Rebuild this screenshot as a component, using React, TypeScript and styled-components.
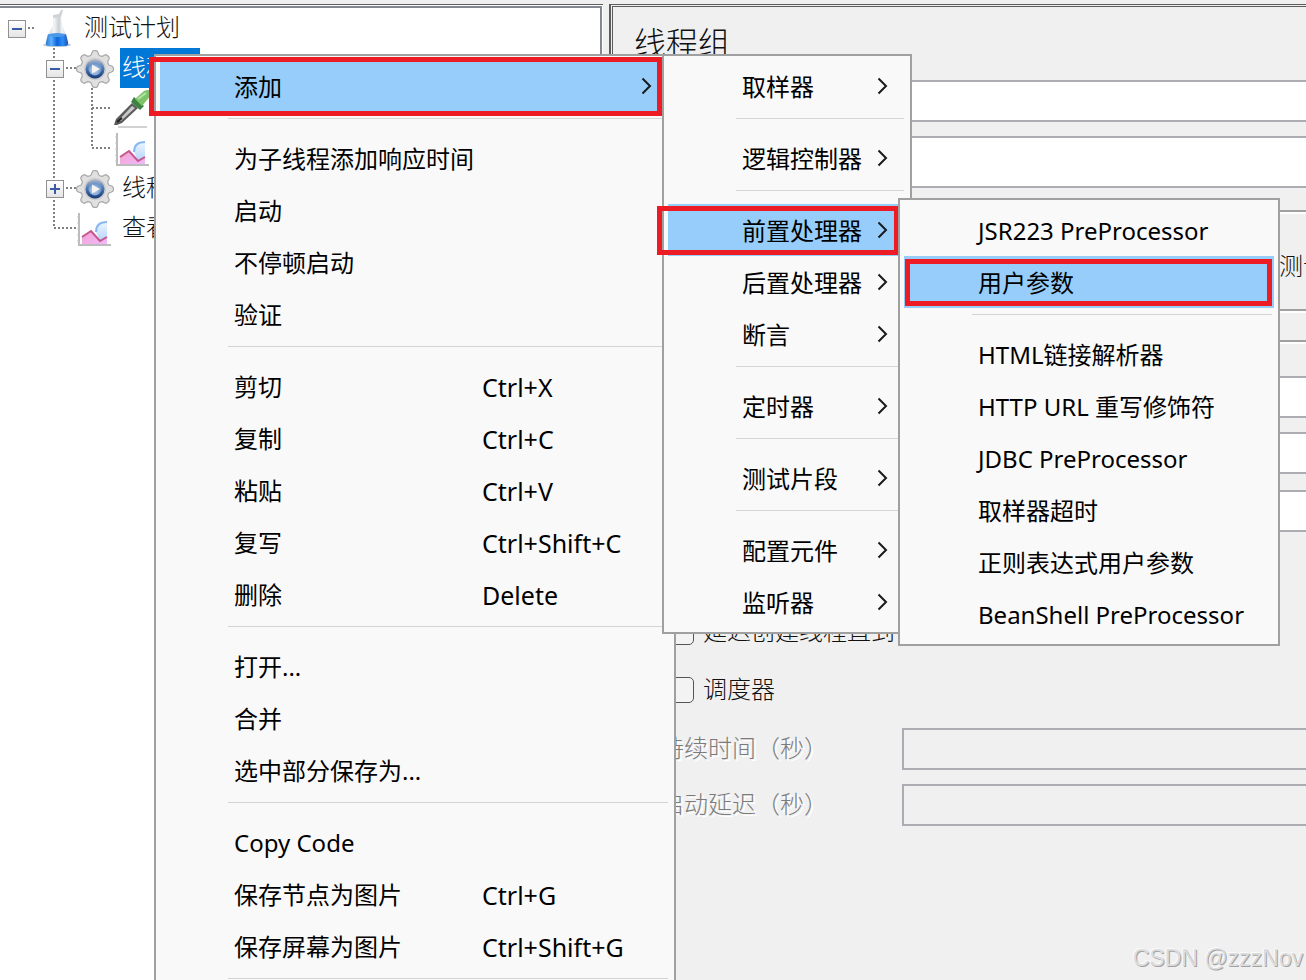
import React from 'react';
import styled, { createGlobalStyle, css } from 'styled-components';

const Global = createGlobalStyle`
  *, *::before, *::after { box-sizing: border-box; }
  html, body { margin: 0; height: 100%; }
  #root { height: 100%; }
  body { background: #f0f0f0; overflow: hidden; }
`;

const songFont = '"Liberation Serif", "Noto Sans CJK SC", serif';

const Window = styled.main`
  position: relative;
  display: flex;
  gap: 6px;
  min-height: 100vh;
  padding-top: 4px;
  background: #f0f0f0;
  color: #111;
  font: 300 24px/40px ${songFont};
  overflow: hidden;
`;

const TreePane = styled.nav`
  flex: 0 0 603px;
  border-top: 1px solid #5c5c5c;
  padding: 1px 1px 0 0;
  background: #fff;
`;

const Tree = styled.ul`
  position: relative;
  height: 100%;
  margin: 0;
  padding: 0;
  border: solid #828790;
  border-width: 2px 2px 0 0;
  background: #fff;
  list-style: none;
`;

const TreeRow = styled.li<{ $level: number }>`
  position: relative;
  display: grid;
  grid-template-columns: 18px 38px auto;
  column-gap: 12px;
  align-items: center;
  justify-content: start;
  height: 40px;
  padding-left: ${(p) => 8 + p.$level * 38}px;
`;

const Expander = styled.button`
  display: block;
  width: 18px;
  height: 18px;
  margin-top: 2px;
  padding: 0;
  border: 1px solid #919191;
  background: linear-gradient(#fff, #e4e4e4);
  svg { display: block; }
`;

const NodeIcon = styled.span`
  grid-column: 2;
  height: 40px;
  svg { display: block; overflow: visible; }
`;

const NodeLabel = styled.span<{ $selected?: boolean }>`
  grid-column: 3;
  margin-left: -6px;
  padding: 0 6px 0 2px;
  white-space: nowrap;
  ${(p) => p.$selected && css`background: #0078d7; color: #fff;`}
`;

const Lines = styled.svg`
  position: absolute;
  left: 0;
  top: 0;
`;

const DetailPane = styled.section`
  flex: 1;
  min-width: 0;
  border: solid #5c5c5c;
  border-width: 1px 0 0 2px;
  padding: 1px 0 0 1px;
`;

const DetailBody = styled.div`
  border: solid #5c5c5c;
  border-width: 1px 0 0 1px;
  padding: 12px 0 0 21px;
`;

const Title = styled.h1`
  margin: 0;
  font: 300 32px/50px ${songFont};
`;

const Field = styled.input<{ $tall?: boolean }>`
  display: block;
  width: 100%;
  height: ${(p) => (p.$tall ? 52 : 42)}px;
  padding: 0 8px;
  border: 2px solid #abadb3;
  border-right: 0;
  border-radius: 0;
  background: #fff;
  font: inherit;
  &:disabled { background: #f0f0f0; }
`;

const Head = styled.div`
  display: grid;
  gap: 14px;
  padding: 11px 0 22px 90px;
`;

const Group = styled.div`
  border: solid #a0a0a0;
  border-width: 2px 0 2px 2px;
  box-shadow: inset 0 2px #fff, 0 2px #fff;
`;

const Actions = styled(Group)`
  height: 101px;
  padding: 35px 0 0 643px;
  white-space: nowrap;
  overflow: hidden;
`;

const Properties = styled(Group)`
  margin-top: 29px;
  padding: 34px 0 0 24px;
  border-bottom: 0;
  box-shadow: inset 0 2px #fff;
`;

const Stack = styled.div`
  display: grid;
  gap: 14px;
  padding-left: 242px;
  & + & { margin-top: 16px; }
`;

const Checks = styled.div`
  display: grid;
  gap: 18px;
  padding: 80px 0 18px 8px;
`;

const Check = styled.label`
  display: flex;
  align-items: center;
  gap: 9px;
  white-space: nowrap;
  input {
    appearance: none;
    width: 26px;
    height: 26px;
    margin: 0;
    border: 1px solid #555;
    border-radius: 5px;
    background: #f3f3f3;
  }
`;

const Timing = styled.div`
  display: grid;
  grid-template-columns: 242px 1fr;
  row-gap: 14px;
  align-items: center;
  label {
    color: #7c7c7c;
    text-shadow: 2px 2px #fff;
    white-space: nowrap;
  }
`;

const Menu = styled.div<{ $x: number; $y: number; $w: number }>`
  position: absolute;
  left: ${(p) => p.$x}px;
  top: ${(p) => p.$y}px;
  width: ${(p) => p.$w}px;
  padding: 4px;
  border: 2px solid #a0a0a0;
  background: #f9f9f9;
  color: #000;
  font: 400 24px/30px "Noto Sans", "Noto Sans CJK SC", sans-serif;
`;

const Item = styled.button<{ $active?: boolean }>`
  position: relative;
  display: grid;
  grid-template-columns: 248px 1fr auto;
  align-items: center;
  width: 100%;
  height: 52px;
  padding: 0 18px 0 74px;
  border: 0;
  background: ${(p) => (p.$active ? '#96cdfb' : 'transparent')};
  color: inherit;
  font: inherit;
  text-align: left;
  white-space: nowrap;
`;

const ItemText = styled.span`
  padding-top: 2px;
`;

const Shortcut = styled(ItemText)`
  font-size: 25px;
`;

const SubItem = styled(Item)`
  grid-template-columns: 1fr auto;
`;

const Divider = styled.hr`
  height: 1px;
  margin: 6px 2px 13px 68px;
  border: 0;
  background: #d5d5d5;
`;

const Mark = styled.span<{ $inset: string }>`
  position: absolute;
  inset: ${(p) => p.$inset};
  border: 5px solid #ed1c24;
  pointer-events: none;
`;

const Watermark = styled.div`
  position: absolute;
  right: 3px;
  bottom: 4px;
  color: #dcdcdc;
  font: 400 23px/36px "Liberation Sans", sans-serif;
  text-shadow: 1px 1px #a2a2a2, -1px -1px #fafafa;
`;

const Chevron = () => (
  <svg width="11" height="18" viewBox="0 0 11 18" fill="none" stroke="#1a1a1a" strokeWidth="2">
    <path d="M1.500 1.500L9 9L1.500 16.500" />
  </svg>
);

const Toggle = ({ open }: { open: boolean }) => (
  <Expander aria-label={open ? '-' : '+'}>
    <svg width="16" height="16" viewBox="0 0 16 16" stroke="#3b5aa5" strokeWidth="2">
      <path d={open ? 'M3 8H13' : 'M3 8H13M8 3V13'} />
    </svg>
  </Expander>
);

const Flask = () => (
  <svg width="38" height="40" viewBox="0 0 38 40">
    <defs>
      <linearGradient id="water" x1="0" x2="1">
        <stop offset="0" stopColor="#2b78cf" />
        <stop offset=".25" stopColor="#5fb0ff" />
        <stop offset=".5" stopColor="#0b63da" />
        <stop offset=".75" stopColor="#2f8cf5" />
        <stop offset="1" stopColor="#1d55b0" />
      </linearGradient>
      <linearGradient id="glass" x1="0" x2="1">
        <stop offset="0" stopColor="#cfd4d8" />
        <stop offset=".35" stopColor="#f4f6f7" />
        <stop offset=".6" stopColor="#c9ced2" />
        <stop offset=".75" stopColor="#f4f6f7" />
        <stop offset="1" stopColor="#c0c6cb" />
      </linearGradient>
    </defs>
    <ellipse cx="19" cy="37" rx="14" ry="2" fill="#b9c9dd" />
    <path d="M15 8L23 7L24 17L28 27L29 34H9L10 27L15 17Z" fill="url(#glass)" />
    <path d="M15 7L21 6L23 2H25L23 9L15 10Z" fill="#cfd3d6" />
    <path d="M10 26Q19 29 28 26L30 34Q31 38 27 38H11Q7 38 8 34Z" fill="url(#water)" />
    <ellipse cx="19" cy="27" rx="8" ry="2" fill="#4a98e8" />
  </svg>
);

// Outline of a cog with eight rounded teeth, one of them at the top.
const gearPath = Array.from({ length: 96 }, (_, i) => {
  const a = (i / 96) * Math.PI * 2;
  const r = 16.3 + 2.2 * Math.tanh(2 * Math.cos(a * 8));
  return `${i ? 'L' : 'M'}${(19 + r * Math.sin(a)).toFixed(1)} ${(21 + r * Math.cos(a)).toFixed(1)}`;
}).join('') + 'Z';

const Gear = () => (
  <svg width="38" height="40" viewBox="0 0 38 40">
    <defs>
      <linearGradient id="ring" x1="0" y1="0" x2="0" y2="1">
        <stop offset="0" stopColor="#a9b7cd" />
        <stop offset=".5" stopColor="#4a73b0" />
        <stop offset="1" stopColor="#173a75" />
      </linearGradient>
      <radialGradient id="disc" cx=".45" cy=".6">
        <stop offset="0" stopColor="#c4dcf3" />
        <stop offset="1" stopColor="#6e98cc" />
      </radialGradient>
    </defs>
    <path d={gearPath} fill="#e0e0e0" stroke="#a8a8a8" strokeWidth="1.200" />
    <circle cx="19" cy="21" r="11" fill="#cbcbcb" />
    <circle cx="19" cy="21" r="9.500" fill="url(#ring)" />
    <circle cx="19" cy="21" r="6.500" fill="url(#disc)" />
    <path d="M16 16.500L24 21L16 25.500Z" fill="#f6f4f0" />
  </svg>
);

const Pipette = () => (
  <svg width="38" height="40" viewBox="0 0 38 40">
    <path d="M4 39H33" stroke="#d2d2d2" strokeWidth="2" />
    <path d="M0 37L2 31L18 15L24 20L8 35L3 37Z" fill="#5b5b5b" />
    <path d="M5 32L18 18L21 20L7 33Z" fill="#c9c9c9" />
    <path d="M3 34L8 30" stroke="#222" strokeWidth="2" />
    <path d="M20 9L30 18L26 22L17 14Z" fill="#3b8240" />
    <path d="M21 11L30 3Q36 0 38 6L28 18Z" fill="#7cc36a" />
    <path d="M24 11L32 5" stroke="#b5e3a5" strokeWidth="2" />
  </svg>
);

const Graph = () => (
  <svg width="38" height="40" viewBox="0 0 38 40">
    <defs>
      <linearGradient id="pink" x1="0" y1="0" x2="1" y2="1">
        <stop offset="0" stopColor="#f3a3cf" />
        <stop offset="1" stopColor="#f0b8fb" />
      </linearGradient>
      <linearGradient id="sky" x1="0" y1="0" x2="0" y2="1">
        <stop offset="0" stopColor="#eef6ff" />
        <stop offset="1" stopColor="#b4d4fb" />
      </linearGradient>
    </defs>
    <path d="M3 5V37H35" fill="none" stroke="#bcbcbc" strokeWidth="2" />
    <path d="M1 9H3M1 15H3M1 21H3M1 27H3M1 33H3" stroke="#c9c9c9" />
    <path d="M31 14Q20 14 20 24L24 33L31 29Z" fill="url(#sky)" />
    <path d="M31 14Q20 14 20 24" fill="none" stroke="#86b8f5" strokeWidth="2" />
    <path d="M6 29L15 23L24 33L31 29V36H6Z" fill="url(#pink)" />
    <path d="M6 29L15 23L24 33L31 29" fill="none" stroke="#c4568c" strokeWidth="2" />
  </svg>
);

type Entry = { text: string; keys?: string; sub?: boolean; active?: boolean; mark?: string } | null;

const mainMenu: Entry[] = [
  { text: '添加', sub: true, active: true, mark: '-3px 8px -4px -11px' },
  null,
  { text: '为子线程添加响应时间' },
  { text: '启动' },
  { text: '不停顿启动' },
  { text: '验证' },
  null,
  { text: '剪切', keys: 'Ctrl+X' },
  { text: '复制', keys: 'Ctrl+C' },
  { text: '粘贴', keys: 'Ctrl+V' },
  { text: '复写', keys: 'Ctrl+Shift+C' },
  { text: '删除', keys: 'Delete' },
  null,
  { text: '打开...' },
  { text: '合并' },
  { text: '选中部分保存为...' },
  null,
  { text: 'Copy Code' },
  { text: '保存节点为图片', keys: 'Ctrl+G' },
  { text: '保存屏幕为图片', keys: 'Ctrl+Shift+G' },
  null,
];

const addMenu: Entry[] = [
  { text: '取样器', sub: true },
  null,
  { text: '逻辑控制器', sub: true },
  null,
  { text: '前置处理器', sub: true, active: true, mark: '2px 7px 1px -11px' },
  { text: '后置处理器', sub: true },
  { text: '断言', sub: true },
  null,
  { text: '定时器', sub: true },
  null,
  { text: '测试片段', sub: true },
  null,
  { text: '配置元件', sub: true },
  { text: '监听器', sub: true },
];

const preMenu: Entry[] = [
  { text: 'JSR223 PreProcessor' },
  { text: '用户参数', active: true, mark: '3px 2px 2px 1px' },
  null,
  { text: 'HTML链接解析器' },
  { text: 'HTTP URL 重写修饰符' },
  { text: 'JDBC PreProcessor' },
  { text: '取样器超时' },
  { text: '正则表达式用户参数' },
  { text: 'BeanShell PreProcessor' },
];

const Entries = ({ entries, keys }: { entries: Entry[]; keys?: boolean }) => {
  const Row = keys ? Item : SubItem;
  return (
    <>
      {entries.map((e, i) =>
        e ? (
          <Row key={i} role="menuitem" $active={e.active}>
            <ItemText>{e.text}</ItemText>
            {keys && <Shortcut>{e.keys}</Shortcut>}
            {e.sub && <Chevron />}
            {e.mark && <Mark $inset={e.mark} />}
          </Row>
        ) : (
          <Divider key={i} />
        ),
      )}
    </>
  );
};

export default function App() {
  return (
    <Window>
      <Global />
      <TreePane>
        <Tree>
          <Lines width="160" height="240" viewBox="0 8 160 240" fill="none" stroke="#808080" strokeWidth="2" strokeDasharray="2 2">
            <path d="M28 28H34M54 48V228H76M54 68H76M54 188H76M92 88V148H110M92 108H110" />
          </Lines>
          <TreeRow $level={0}><Toggle open /><NodeIcon><Flask /></NodeIcon><NodeLabel>测试计划</NodeLabel></TreeRow>
          <TreeRow $level={1}><Toggle open /><NodeIcon><Gear /></NodeIcon><NodeLabel $selected>线程组</NodeLabel></TreeRow>
          <TreeRow $level={2}><NodeIcon><Pipette /></NodeIcon></TreeRow>
          <TreeRow $level={2}><NodeIcon><Graph /></NodeIcon></TreeRow>
          <TreeRow $level={1}><Toggle open={false} /><NodeIcon><Gear /></NodeIcon><NodeLabel>线程</NodeLabel></TreeRow>
          <TreeRow $level={1}><NodeIcon><Graph /></NodeIcon><NodeLabel>查看</NodeLabel></TreeRow>
        </Tree>
      </TreePane>

      <DetailPane>
        <DetailBody>
          <Title>线程组</Title>
          <Head>
            <Field aria-label="名称" />
            <Field aria-label="注释" $tall />
          </Head>
          <Actions>测试</Actions>
          <Properties>
            <Stack>
              <Field aria-label="线程数" />
              <Field aria-label="时间" />
            </Stack>
            <Stack>
              <Field aria-label="循环次数" />
            </Stack>
            <Checks>
              <Check><input type="checkbox" />延迟创建线程直到</Check>
              <Check><input type="checkbox" />调度器</Check>
            </Checks>
            <Timing>
              <label htmlFor="duration">持续时间（秒）</label>
              <Field id="duration" disabled />
              <label htmlFor="delay">启动延迟（秒）</label>
              <Field id="delay" disabled />
            </Timing>
          </Properties>
        </DetailBody>
      </DetailPane>

      <Menu role="menu" $x={154} $y={54} $w={522}><Entries entries={mainMenu} keys /></Menu>
      <Menu role="menu" $x={662} $y={54} $w={250}><Entries entries={addMenu} /></Menu>
      <Menu role="menu" $x={898} $y={198} $w={382}><Entries entries={preMenu} /></Menu>
      <Watermark>CSDN @zzzNov</Watermark>
    </Window>
  );
}
